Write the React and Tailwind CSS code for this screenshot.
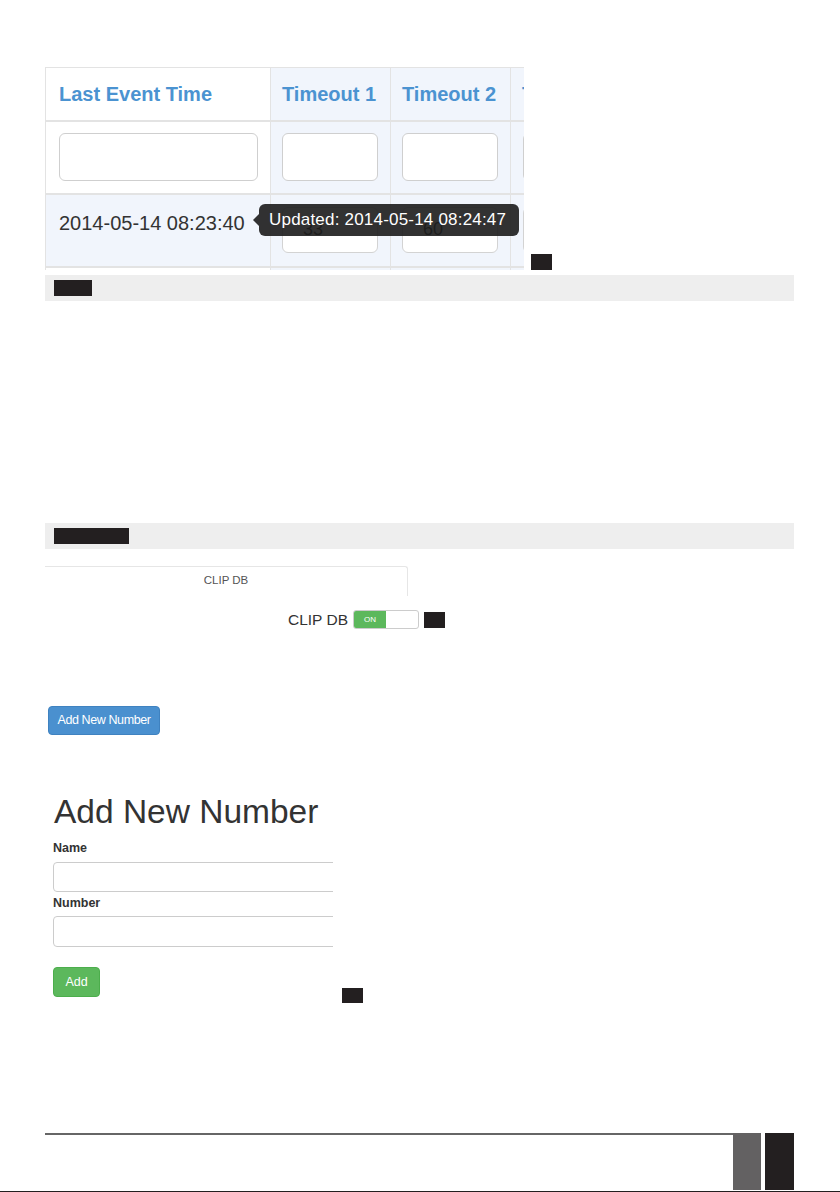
export default function App() {
  const sans = { fontFamily: '"Liberation Sans", Arial, sans-serif' };

  return (
    <div
      className="w-[840px] h-[1192px] bg-white flex flex-col text-[#333]"
      style={sans}
    >
      {/* Screenshot of the event table */}
      <div className="flex items-end pl-[45px] pt-[67px]">
        <div className="relative w-[479px] h-[203px] overflow-hidden border-t border-l border-[#e3e3e3]">
          {/* header row */}
          <div className="flex h-[54px] border-b-[2px] border-[#e3e3e3]">
            <div className="w-[225px] shrink-0 flex items-center pl-[13px] border-r border-[#e3e3e3] bg-white">
              <span className="text-[20px] font-bold text-[#4b93d1]">Last Event Time</span>
            </div>
            <div className="w-[120px] shrink-0 flex items-center pl-[11px] border-r border-[#e3e3e3] bg-[#f1f5fc]">
              <span className="text-[20px] font-bold text-[#4b93d1]">Timeout 1</span>
            </div>
            <div className="w-[120px] shrink-0 flex items-center pl-[11px] border-r border-[#e3e3e3] bg-[#f1f5fc]">
              <span className="text-[20px] font-bold text-[#4b93d1]">Timeout 2</span>
            </div>
            <div className="w-[120px] shrink-0 flex items-center pl-[11px] bg-[#f1f5fc]">
              <span className="text-[20px] font-bold text-[#4b93d1]">T</span>
            </div>
          </div>

          {/* filter row */}
          <div className="flex h-[73px] border-b-[2px] border-[#e3e3e3]">
            <div className="w-[225px] shrink-0 pl-[13px] pt-[11px] border-r border-[#e3e3e3] bg-white">
              <div className="w-[199px] h-[48px] rounded-[6px] border border-[#cfcfcf] bg-white" />
            </div>
            <div className="w-[120px] shrink-0 pl-[11px] pt-[11px] border-r border-[#e3e3e3] bg-[#f1f5fc]">
              <div className="w-[96px] h-[48px] rounded-[6px] border border-[#cfcfcf] bg-white" />
            </div>
            <div className="w-[120px] shrink-0 pl-[11px] pt-[11px] border-r border-[#e3e3e3] bg-[#f1f5fc]">
              <div className="w-[96px] h-[48px] rounded-[6px] border border-[#cfcfcf] bg-white" />
            </div>
            <div className="w-[120px] shrink-0 pl-[12px] pt-[11px] bg-[#f1f5fc]">
              <div className="w-[96px] h-[48px] rounded-[6px] border border-[#cfcfcf] bg-white" />
            </div>
          </div>

          {/* data row */}
          <div className="flex h-[73px] border-b-[2px] border-[#e3e3e3] bg-[#f1f5fc]">
            <div className="w-[225px] shrink-0 flex items-center pl-[13px] pb-[16px] border-r border-[#e3e3e3]">
              <span className="text-[20px] text-[#333]">2014-05-14 08:23:40</span>
            </div>
            <div className="w-[120px] shrink-0 pl-[11px] pt-[12px] border-r border-[#e3e3e3]">
              <div className="w-[96px] h-[46px] rounded-[6px] border border-[#d3d3d3] bg-white pl-[20px] pt-[8px] text-[18px]">33</div>
            </div>
            <div className="w-[120px] shrink-0 pl-[11px] pt-[12px] border-r border-[#e3e3e3]">
              <div className="w-[96px] h-[46px] rounded-[6px] border border-[#d3d3d3] bg-white pl-[20px] pt-[8px] text-[18px]">60</div>
            </div>
            <div className="w-[120px] shrink-0 pl-[12px] pt-[12px]">
              <div className="w-[96px] h-[46px] rounded-[6px] border border-[#d3d3d3] bg-white" />
            </div>
          </div>
          <div className="flex h-[10px]">
            <div className="w-[225px] shrink-0 border-r border-[#e3e3e3]" />
            <div className="w-[120px] shrink-0 border-r border-[#e3e3e3] bg-[#f1f5fc]" />
            <div className="w-[120px] shrink-0 border-r border-[#e3e3e3] bg-[#f1f5fc]" />
            <div className="w-[120px] shrink-0 bg-[#f1f5fc]" />
          </div>

          {/* tooltip */}
          <div className="absolute left-[207px] top-[136px] flex items-center">
            <div className="w-0 h-0 border-y-[6px] border-y-transparent border-r-[6px] border-r-[#1c1c1c]/90" />
            <div className="h-[32px] w-[260px] rounded-[6px] bg-[#1c1c1c]/90 flex items-center pl-[10px] text-[17px] text-white tracking-[0.2px]">
              Updated: 2014-05-14 08:24:47
            </div>
          </div>
        </div>
        <div className="ml-[7px] w-[21px] h-[16px] bg-[#231f20]" />
      </div>

      {/* first gray bar */}
      <div className="ml-[45px] mt-[5px] w-[749px] h-[26px] bg-[#eeeeee] flex items-center pl-[9px]">
        <div className="w-[38px] h-[16px] bg-[#231f20]" />
      </div>

      {/* second gray bar */}
      <div className="ml-[45px] mt-[222px] w-[749px] h-[26px] bg-[#eeeeee] flex items-center pl-[9px]">
        <div className="w-[75px] h-[16px] bg-[#231f20]" />
      </div>

      {/* CLIP DB tab */}
      <div className="ml-[45px] mt-[17px] w-[363px] h-[30px] border-t border-r border-[#e6e6e6] rounded-tr-[3px] flex items-center justify-center">
        <span className="text-[11.5px] text-[#555] pb-[2px]">CLIP DB</span>
      </div>

      {/* CLIP DB switch */}
      <div className="ml-[288px] mt-[14px] flex items-center h-[19px]">
        <span className="text-[15.5px] text-[#333] leading-none">CLIP DB</span>
        <div className="ml-[5px] w-[66px] h-[19px] rounded-[3px] border border-[#cccccc] flex overflow-hidden bg-white">
          <div className="w-[32px] h-full bg-[#5cb85c] flex items-center justify-center text-[8px] text-white">ON</div>
        </div>
        <div className="ml-[5px] w-[21px] h-[16px] bg-[#231f20]" />
      </div>

      {/* Add New Number button */}
      <div className="ml-[48px] mt-[77px]">
        <button className="w-[112px] h-[29px] rounded-[4px] bg-[#4a90cf] border border-[#3f82c0] text-[12.5px] text-white tracking-[-0.4px]">
          Add New Number
        </button>
      </div>

      {/* Add New Number form */}
      <div className="ml-[53px] mt-[60px]">
        <h1 className="text-[33.5px] leading-[33px] text-[#333] ml-[1px]">Add New Number</h1>
        <div className="mt-[12px] text-[12.5px] leading-[16px] font-bold text-[#333]">Name</div>
        <div className="mt-[6px] w-[280px] overflow-hidden">
          <div className="w-[320px] h-[30px] rounded-[4px] border border-[#cccccc] bg-white" />
        </div>
        <div className="mt-[3px] text-[12.5px] leading-[16px] font-bold text-[#333]">Number</div>
        <div className="mt-[5px] w-[280px] overflow-hidden">
          <div className="w-[320px] h-[31px] rounded-[4px] border border-[#cccccc] bg-white" />
        </div>
        <div className="mt-[20px] flex items-end">
          <button className="w-[47px] h-[30px] rounded-[4px] bg-[#5cb85c] border border-[#4cae4c] text-[12.5px] text-white">
            Add
          </button>
          <div className="ml-[242px] mb-[-6px] w-[21px] h-[15px] bg-[#231f20]" />
        </div>
      </div>

      {/* footer */}
      <div className="mt-auto flex h-[58px]">
        <div className="ml-[45px] w-[688px] border-t-[2px] border-[#666666]" />
        <div className="w-[28px] h-[57px] bg-[#636162]" />
        <div className="ml-[4px] w-[29px] h-[57px] bg-[#231f20]" />
      </div>
      <div className="h-[1px] bg-[#231f20]" />
    </div>
  );
}
